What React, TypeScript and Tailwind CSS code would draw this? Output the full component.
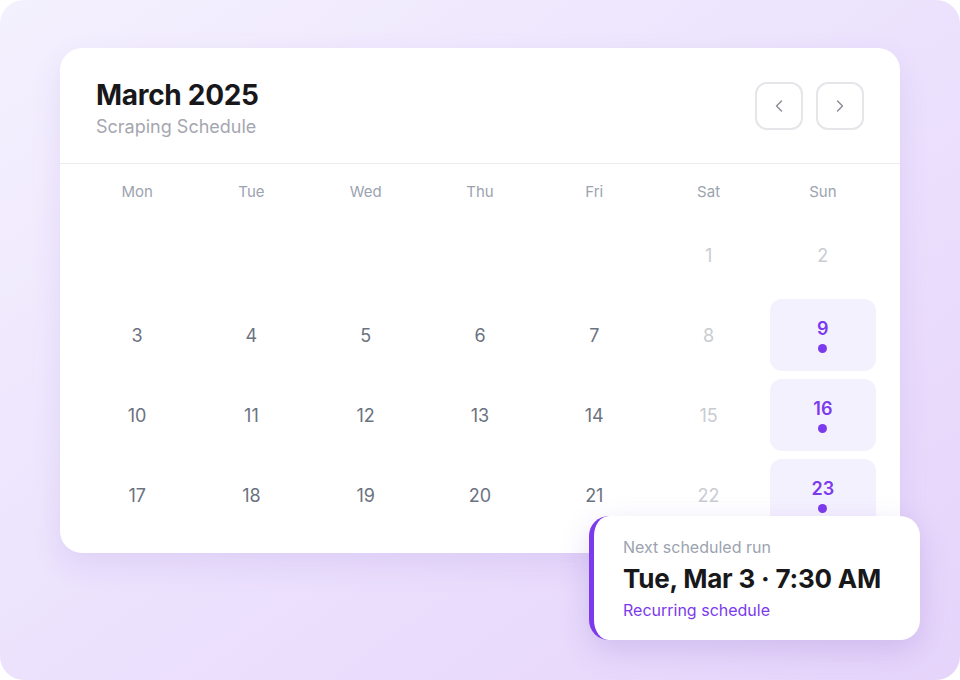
import React from "react";
import { ChevronLeft, ChevronRight } from "lucide-react";

const days = ["Mon", "Tue", "Wed", "Thu", "Fri", "Sat", "Sun"];

type Cell = { n: number | null; tone: "normal" | "muted" | "run" };

const rows: Cell[][] = [
  [null, null, null, null, null, 1, 2].map((n, i) => ({ n, tone: i >= 5 ? "muted" : "normal" })),
  [3, 4, 5, 6, 7, 8, 9].map((n, i) => ({ n, tone: i === 5 ? "muted" : i === 6 ? "run" : "normal" })),
  [10, 11, 12, 13, 14, 15, 16].map((n, i) => ({ n, tone: i === 5 ? "muted" : i === 6 ? "run" : "normal" })),
  [17, 18, 19, 20, 21, 22, 23].map((n, i) => ({ n, tone: i === 5 ? "muted" : i === 6 ? "run" : "normal" })),
];

function DayCell({ cell }: { cell: Cell }) {
  if (cell.n === null) return <div className="h-[72px]" />;
  if (cell.tone === "run") {
    return (
      <div className="h-[72px] rounded-xl bg-[#f4f1ff] flex flex-col items-center justify-center gap-[3px]">
        <span className="text-[18px] leading-6 font-semibold text-[#7c3aed]">{cell.n}</span>
        <span className="w-[9px] h-[9px] rounded-full bg-[#7c3aed]" />
      </div>
    );
  }
  return (
    <div
      className={
        "h-[72px] flex items-center justify-center text-[18px] " +
        (cell.tone === "muted" ? "text-[#c9ccd2]" : "text-[#6b7280]")
      }
    >
      {cell.n}
    </div>
  );
}

export default function App() {
  return (
    <div className="w-[960px] h-[680px] bg-white font-['Inter',sans-serif]">
      <div className="relative w-[960px] h-[680px] rounded-[24px] bg-gradient-to-br from-[#f4f1fe] via-[#ece2fd] to-[#e6d4fb] pt-12 px-[60px]">
        <div className="w-[840px] h-[505px] bg-white rounded-[22px] shadow-[0_12px_30px_rgba(120,80,200,0.12)]">
          <div className="flex items-start justify-between px-9 pt-[30px] h-[116px] border-b border-[#ececf0]">
            <div>
              <h1 className="text-[28px] leading-[34px] font-bold text-[#18181b] tracking-[-0.3px]">March 2025</h1>
              <p className="text-[18px] leading-6 text-[#a6a6b0] mt-[3px]">Scraping Schedule</p>
            </div>
            <div className="flex gap-[13px] mt-1">
              <button className="w-12 h-12 rounded-xl border-2 border-[#e5e5ea] flex items-center justify-center text-[#8a8f99]">
                <ChevronLeft className="w-5 h-5" strokeWidth={1.75} />
              </button>
              <button className="w-12 h-12 rounded-xl border-2 border-[#e5e5ea] flex items-center justify-center text-[#8a8f99]">
                <ChevronRight className="w-5 h-5" strokeWidth={1.75} />
              </button>
            </div>
          </div>
          <div className="px-[24px] pt-4">
            <div className="grid grid-cols-7 gap-x-2 h-6 items-center">
              {days.map((d) => (
                <div key={d} className="text-center text-[15px] text-[#9ca3af]">
                  {d}
                </div>
              ))}
            </div>
            <div className="mt-[15px] flex flex-col gap-2">
              {rows.map((r, i) => (
                <div key={i} className="grid grid-cols-7 gap-x-2">
                  {r.map((c, j) => (
                    <DayCell key={j} cell={c} />
                  ))}
                </div>
              ))}
            </div>
          </div>
        </div>

        <div className="absolute left-[589px] top-[516px] w-[331px] h-[124px] bg-white rounded-[20px] border-l-[5px] border-[#7c3aed] shadow-[0_10px_30px_rgba(100,60,180,0.18)] pl-[29px] pt-[21px]">
          <p className="text-[16px] leading-5 text-[#9ca3af]">Next scheduled run</p>
          <p className="text-[26px] leading-8 font-bold text-[#18181b] mt-[6px] tracking-[-0.2px]">Tue, Mar 3 · 7:30 AM</p>
          <p className="text-[16px] leading-5 text-[#7c3aed] mt-[5px]">Recurring schedule</p>
        </div>
      </div>
    </div>
  );
}
